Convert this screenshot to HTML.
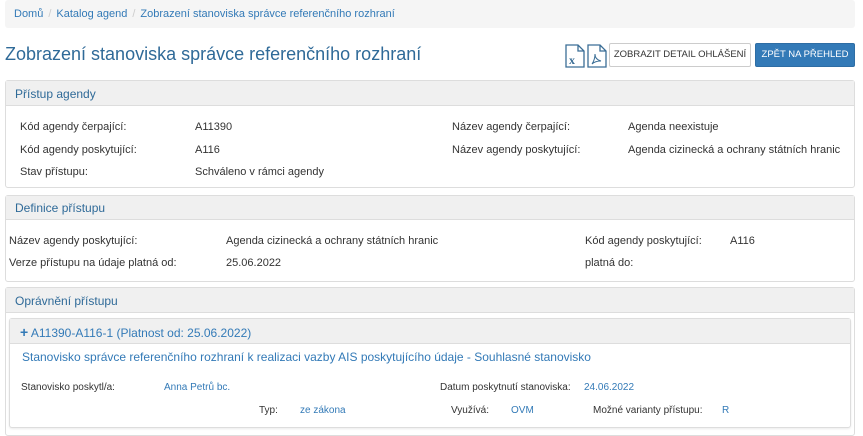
<!DOCTYPE html>
<html><head><meta charset="utf-8"><style>
*{box-sizing:border-box;margin:0;padding:0}
body{width:863px;height:436px;overflow:hidden;background:#fff;font-family:"Liberation Sans",sans-serif;font-size:11px;color:#333;position:relative}
.a{position:absolute;white-space:nowrap}
.bc{left:5px;top:0;width:850px;height:28px;background:#f5f5f5;border-radius:3px}
.l{color:#337ab7}
.panel{position:absolute;left:5px;width:850px;border:1px solid #ddd;border-radius:3px;background:#fff}
.ph{background:#f0f0f0;border-bottom:1px solid #ddd;height:25px;padding:6px 9px;color:#2f6a98;font-size:12px}
.btn{position:absolute;top:43px;height:24px;font-size:9.5px;line-height:22px;text-align:center;border-radius:2px}
</style></head><body>
<div class="a bc"></div>
<div class="a" style="left:14px;top:8px;color:#337ab7">Domů<span style="color:#ccc;margin:0 5px">/</span>Katalog agend<span style="color:#ccc;margin:0 5px">/</span>Zobrazení stanoviska správce referenčního rozhraní</div>
<div class="a" style="left:5px;top:44px;font-size:18px;color:#2f6a98">Zobrazení stanoviska správce referenčního rozhraní</div>
<svg class="a" style="left:565px;top:44px" width="20" height="24" viewBox="0 0 20 24"><path d="M1 1h12l6 6v16H1z M13 1v6h6" fill="none" stroke="#3b6e96" stroke-width="1.3"/><text x="4" y="20" font-size="12" font-weight="bold" font-family="Liberation Serif" fill="#3b6e96">x</text></svg>
<svg class="a" style="left:587px;top:44px" width="20" height="24" viewBox="0 0 20 24"><path d="M1 1h12l6 6v16H1z M13 1v6h6" fill="none" stroke="#3b6e96" stroke-width="1.3"/><path d="M5 20c2-3 3-7 3-10 0 4 2 6 6 7-4 0-7 1-9 3z" fill="none" stroke="#3b6e96" stroke-width="1"/></svg>
<div class="btn" style="left:609px;width:142px;border:1px solid #ccc;color:#333">ZOBRAZIT DETAIL OHLÁŠENÍ</div>
<div class="btn" style="left:755px;width:100px;background:#337ab7;color:#fff;border:1px solid #2e6da4">ZPĚT NA PŘEHLED</div>

<div class="panel" style="top:80px;height:108px"><div class="ph">Přístup agendy</div></div>
<div class="a" style="left:20px;top:121px">Kód agendy čerpající:</div><div class="a" style="left:195px;top:121px">A11390</div>
<div class="a" style="left:452px;top:121px">Název agendy čerpající:</div><div class="a" style="left:628px;top:121px">Agenda neexistuje</div>
<div class="a" style="left:20px;top:144px">Kód agendy poskytující:</div><div class="a" style="left:195px;top:144px">A116</div>
<div class="a" style="left:452px;top:144px">Název agendy poskytující:</div><div class="a" style="left:628px;top:144px">Agenda cizinecká a ochrany státních hranic</div>
<div class="a" style="left:20px;top:166px">Stav přístupu:</div><div class="a" style="left:195px;top:166px">Schváleno v rámci agendy</div>

<div class="panel" style="top:195px;height:87px"><div class="ph" style="height:24px;padding-top:5px">Definice přístupu</div></div>
<div class="a" style="left:9px;top:235px">Název agendy poskytující:</div><div class="a" style="left:226px;top:235px">Agenda cizinecká a ochrany státních hranic</div>
<div class="a" style="left:585px;top:235px">Kód agendy poskytující:</div><div class="a" style="left:730px;top:235px">A116</div>
<div class="a" style="left:9px;top:257px">Verze přístupu na údaje platná od:</div><div class="a" style="left:226px;top:257px">25.06.2022</div>
<div class="a" style="left:585px;top:257px">platná do:</div>

<div class="panel" style="top:287px;height:149px"><div class="ph">Oprávnění přístupu</div></div>
<div class="panel" style="left:9px;top:318px;width:842px;height:110px;box-shadow:0 1px 2px rgba(0,0,0,.08)"><div class="ph" style="height:25px;padding:5px 10px;font-size:12px;color:#337ab7"><b style="font-size:14px">+</b> A11390-A116-1 (Platnost od: 25.06.2022)</div></div>
<div class="a" style="left:22px;top:350px;font-size:12px;color:#337ab7">Stanovisko správce referenčního rozhraní k realizaci vazby AIS poskytujícího údaje - Souhlasné stanovisko</div>
<div class="a" style="left:21px;top:382px;font-size:10px">Stanovisko poskytl/a:</div><div class="a l" style="left:164px;top:382px;font-size:10px">Anna Petrů bc.</div>
<div class="a" style="left:440px;top:382px;font-size:10px">Datum poskytnutí stanoviska:</div><div class="a l" style="left:584px;top:382px;font-size:10px">24.06.2022</div>
<div class="a" style="left:259px;top:405px;font-size:10px">Typ:</div><div class="a l" style="left:300px;top:405px;font-size:10px">ze zákona</div>
<div class="a" style="left:451px;top:405px;font-size:10px">Využívá:</div><div class="a l" style="left:511px;top:405px;font-size:10px">OVM</div>
<div class="a" style="left:593px;top:405px;font-size:10px">Možné varianty přístupu:</div><div class="a l" style="left:722px;top:405px;font-size:10px">R</div>
</body></html>
